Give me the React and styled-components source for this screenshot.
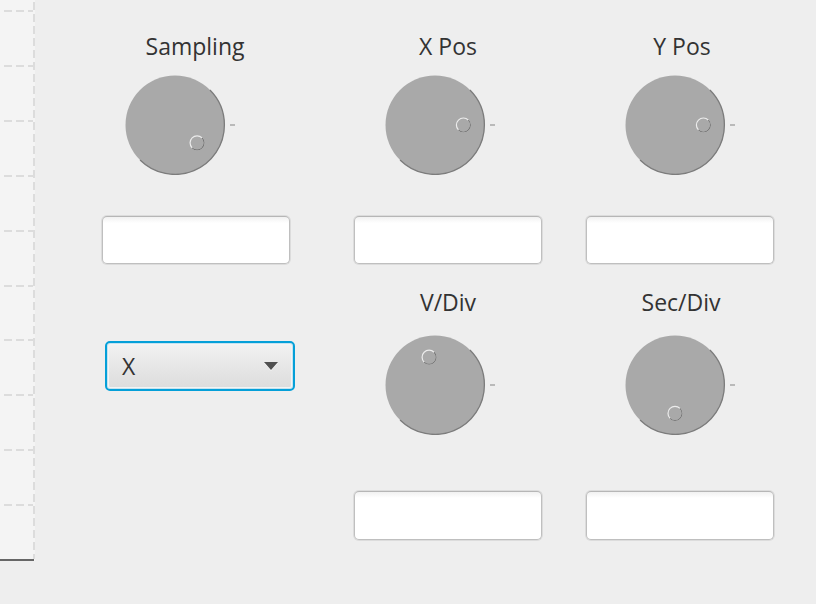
import React from 'react';
import styled, { createGlobalStyle } from 'styled-components';

const GlobalStyle = createGlobalStyle`
  html, body {
    margin: 0;
    padding: 0;
    background: #eeeeee;
  }
  body {
    font-family: "Open Sans", "Noto Sans", sans-serif;
  }
`

const Screen = styled.div`
  display: flex;
  flex-direction: row;
  height: 604px;
  background: #eeeeee;
  overflow: hidden;
`

const ChartStrip = styled.div`
  width: 35px;
  height: 561px;
  flex: none;
  background: #f4f4f4;
`

const Controls = styled.div`
  display: flex;
  flex-direction: row;
  align-items: flex-start;
  padding: 31px 0 0 67px;
`

const Column = styled.div`
  display: flex;
  flex-direction: column;
  align-items: flex-start;
  width: 188px;
  margin-left: ${p => p.$gap || 0}px;
`

const Label = styled.div`
  width: 100%;
  height: 31px;
  margin-top: ${p => p.$top || 0}px;
  text-align: center;
  font-size: 23px;
  line-height: 31px;
  color: #333333;
  transform: translateX(${p => p.$nudge || 0}px);
`

const KnobBox = styled.div`
  width: 112px;
  height: 100px;
  margin-top: ${p => p.$top}px;
  margin-left: ${p => p.$shift}px;

  svg {
    display: block;
  }
`

const Field = styled.input`
  box-sizing: border-box;
  width: 188px;
  height: ${p => p.$height || 48}px;
  margin-top: ${p => p.$top}px;
  border: 1px solid #bfbfbf;
  border-top-color: #b6b6b6;
  border-radius: 5px;
  background: linear-gradient(to bottom, #f1f1f1 0, #ffffff 6px);
  box-shadow: 0 0 0 1px rgba(205, 205, 205, 0.55);
  outline: none;
`

const Combo = styled.div`
  box-sizing: border-box;
  display: flex;
  align-items: center;
  justify-content: space-between;
  width: 190px;
  height: 50px;
  margin-top: 77px;
  margin-left: 3px;
  padding: 0 15px 0 15px;
  border: 2px solid #049fd8;
  border-radius: 5px;
  background: linear-gradient(to bottom, #f2f2f2, #dcdcdc);
  box-shadow: inset 0 0 0 1px #c4e3f0, inset 0 0 0 2px #f4f4f4;
  font-size: 23px;
  color: #333333;
`

const ComboText = styled.span`
  line-height: 31px;
`

const Arrow = styled.span`
  width: 0;
  height: 0;
  border-left: 7px solid transparent;
  border-right: 7px solid transparent;
  border-top: 8px solid #505050;
  filter: drop-shadow(0 1px 0 rgba(255, 255, 255, 0.7));
`

const gridLines = [];
for (let k = 1; k <= 10; k++) gridLines.push(Math.round(560 - 54.9 * k));

function ChartGrid() {
  return (
    <ChartStrip>
      <svg width="35" height="561">
        {gridLines.map(y => (
          <line key={y} x1="4" x2="33" y1={y} y2={y}
                stroke="#dcdcdc" strokeWidth="2" strokeDasharray="8 4" />
        ))}
        <line x1="34" x2="34" y1="2" y2="559" stroke="#dcdcdc" strokeWidth="2" strokeDasharray="8 4" />
        <line x1="0" x2="34" y1="560" y2="560" stroke="#666666" strokeWidth="2" />
      </svg>
    </ChartStrip>
  );
}

// point on circle, angle in degrees (screen coords, clockwise from +x)
const pt = (cx, cy, r, deg) => {
  const a = deg * Math.PI / 180;
  return [cx + r * Math.cos(a), cy + r * Math.sin(a)];
};

const arc = (cx, cy, r, from, mid, to) => {
  const [x1, y1] = pt(cx, cy, r, from);
  const [x2, y2] = pt(cx, cy, r, mid);
  const [x3, y3] = pt(cx, cy, r, to);
  return `M${x1} ${y1} A${r} ${r} 0 0 1 ${x2} ${y2} A${r} ${r} 0 0 1 ${x3} ${y3}`;
};

function Knob({ angle, top, shift }) {
  const [ix, iy] = pt(50, 50, 28.4, angle);
  return (
    <KnobBox $top={top} $shift={shift}>
      <svg width="112" height="100" viewBox="0 0 112 100">
        <circle cx="50" cy="50" r="49.5" fill="#a9a9a9" />
        <path d={arc(50, 50, 49.4, -45, 0, 135)} fill="none" stroke="#7c7c7c" strokeWidth="1.3" />
        <circle cx={ix} cy={iy} r="7" fill="#a9a9a9" stroke="#ececec" strokeWidth="1.2" />
        <path d={arc(ix, iy, 7, -45, 45, 135)} fill="none" stroke="#767676" strokeWidth="1.2" />
        <line x1="105" x2="110" y1="50" y2="50" stroke="#9c9c9c" strokeWidth="1.3" />
      </svg>
    </KnobBox>
  );
}

function App() {
  return (
    <Screen>
      <GlobalStyle />
      <ChartGrid />
      <Controls>
        <Column>
          <Label $nudge={-1}>Sampling</Label>
          <Knob angle={39} top={13} shift={23} />
          <Field $top={41} readOnly />
          <Combo>
            <ComboText>X</ComboText>
            <Arrow />
          </Combo>
        </Column>

        <Column $gap={64}>
          <Label>X Pos</Label>
          <Knob angle={0} top={13} shift={31} />
          <Field $top={41} readOnly />
          <Label $top={23}>V/Div</Label>
          <Knob angle={-102} top={17} shift={31} />
          <Field $top={56} $height={49} readOnly />
        </Column>

        <Column $gap={44}>
          <Label $nudge={2}>Y Pos</Label>
          <Knob angle={0} top={13} shift={39} />
          <Field $top={41} readOnly />
          <Label $top={23} $nudge={1}>Sec/Div</Label>
          <Knob angle={90} top={17} shift={39} />
          <Field $top={56} $height={49} readOnly />
        </Column>
      </Controls>
    </Screen>
  );
}

export default App;
